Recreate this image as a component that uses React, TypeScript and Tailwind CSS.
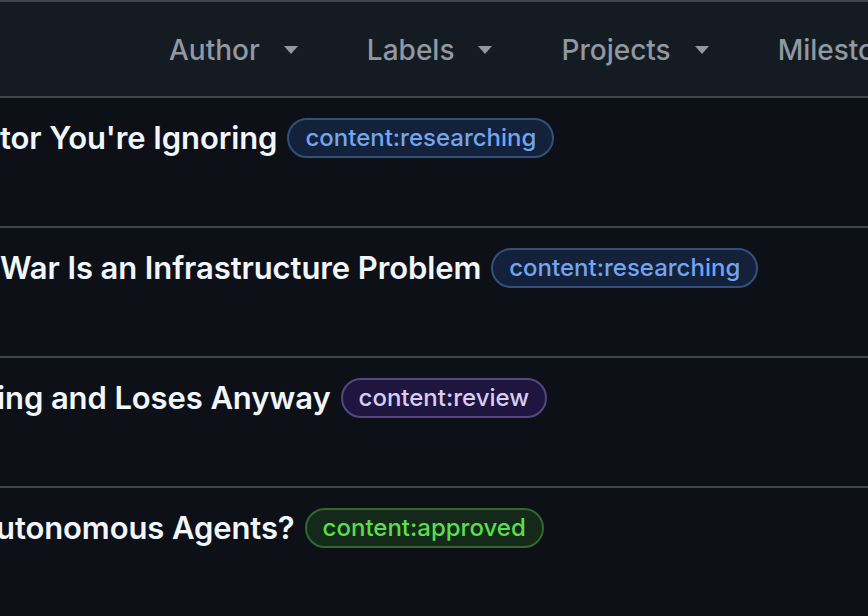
type Label = "researching" | "review" | "approved";

const LABEL_STYLES: Record<Label, string> = {
  researching: "border-[#31507a] bg-[#14213a] text-[#72a5f0]",
  review: "border-[#55477f] bg-[#1f1640] text-[#d9cdf7]",
  approved: "border-[#2f6a2a] bg-[#15291a] text-[#5ade4b]",
};

const ISSUES: { title: string; label: Label; shift: string }[] = [
  { title: "tor You're Ignoring", label: "researching", shift: "ml-0" },
  { title: "War Is an Infrastructure Problem", label: "researching", shift: "ml-0" },
  { title: "ing and Loses Anyway", label: "review", shift: "-ml-[3px]" },
  { title: "utonomous Agents?", label: "approved", shift: "-ml-[4px]" },
];

const FILTERS = ["Author", "Labels", "Projects", "Milestones"];

function Caret() {
  return (
    <svg width="14" height="8" viewBox="0 0 14 8" className="shrink-0">
      <path d="M0 0h14L7 8z" fill="currentColor" />
    </svg>
  );
}

function IssueLabel({ kind }: { kind: Label }) {
  return (
    <span
      className={`inline-flex h-[40px] items-center whitespace-nowrap rounded-full border-2 px-[16px] text-[24px] font-medium ${LABEL_STYLES[kind]}`}
    >
      content:{kind}
    </span>
  );
}

export default function App() {
  return (
    <div className="h-[616px] w-[868px] overflow-hidden bg-[#0d1117] font-['Inter',sans-serif]">
      <div className="flex h-[98px] items-center gap-[69px] border-y-2 border-[#3d444d] bg-[#151b23] pl-[169px] pt-[2px] text-[28px] font-medium text-[#9198a1]">
        {FILTERS.map((name) => (
          <div key={name} className="flex shrink-0 items-center gap-[24px] whitespace-nowrap">
            {name}
            <Caret />
          </div>
        ))}
      </div>

      {ISSUES.map((issue) => (
        <div key={issue.title} className="h-[130px] border-b-2 border-[#3d444d] pt-[20px]">
          <div className={`flex items-center gap-[10px] whitespace-nowrap ${issue.shift}`}>
            <span className="text-[31px] font-semibold leading-[40px] tracking-[-0.1px] text-[#f0f6fc]">
              {issue.title}
            </span>
            <IssueLabel kind={issue.label} />
          </div>
        </div>
      ))}
    </div>
  );
}
